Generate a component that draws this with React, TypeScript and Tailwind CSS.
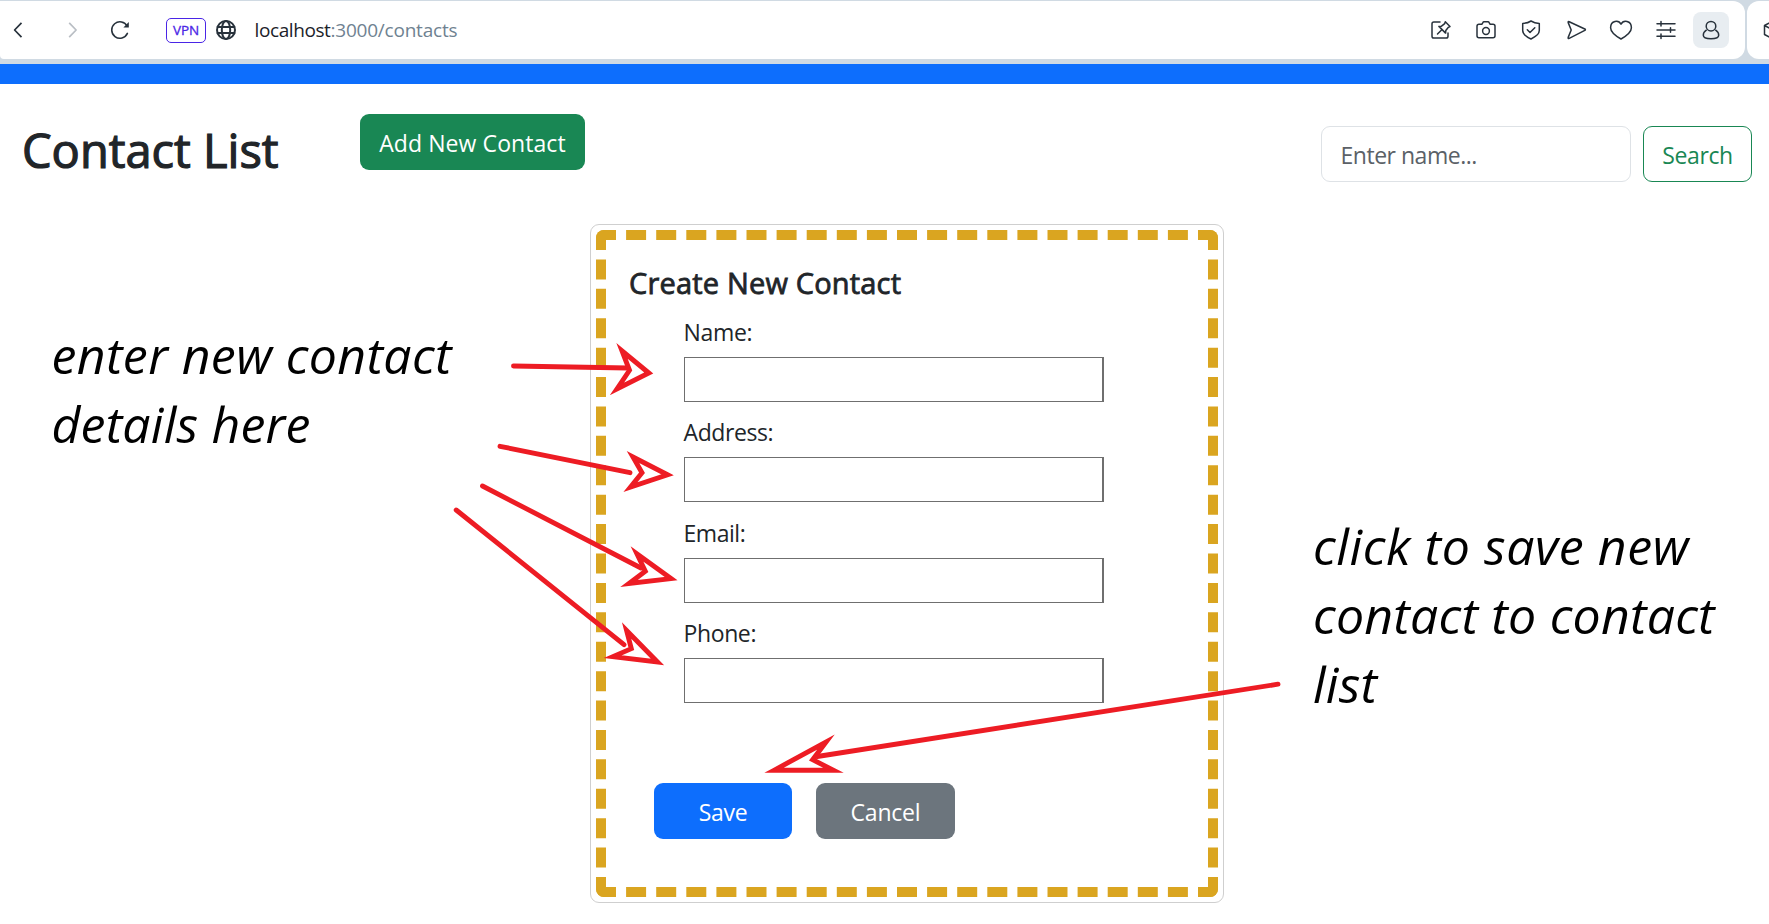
import type { ReactNode } from "react";

function Glyph({ children, className = "" }: { children: ReactNode; className?: string }) {
  return (
    <svg
      viewBox="0 0 24 24"
      className={`h-6 w-6 shrink-0 ${className}`}
      fill="none"
      stroke="currentColor"
      strokeWidth="1.5"
      strokeLinecap="round"
      strokeLinejoin="round"
    >
      {children}
    </svg>
  );
}

function BrowserBar() {
  return (
    <div className="flex h-16 gap-[2px] bg-[#d0dae3] pt-px pb-[5px] text-[#28323c]">
      <div className="flex w-[1745px] shrink-0 items-center rounded-r-xl rounded-bl-sm bg-white">
        <Glyph className="ml-[6px]">
          <path d="M15.5 4.8 8.6 12l6.9 7.2" strokeLinecap="butt" strokeWidth="1.7" />
        </Glyph>
        <Glyph className="ml-[31px] text-[#b9bec4]">
          <path d="m8.2 4.8 6.9 7.2-6.9 7.2" strokeLinecap="butt" strokeWidth="1.7" />
        </Glyph>
        <Glyph className="ml-[23px]">
          <path d="M19.2 8.2A8.2 8.2 0 1 0 19.4 15.4" strokeWidth="1.6" />
          <path d="M20.8 4v5.4h-5.4z" fill="currentColor" stroke="none" />
        </Glyph>
        <div className="ml-[34px] flex h-[25px] w-10 items-center justify-center rounded-[5px] border border-[#4a25e6] pt-[2px] text-[13.5px] leading-none tracking-[-0.1px] text-[#4a25e6] [-webkit-text-stroke:0.3px_#4a25e6]">
          VPN
        </div>
        <Glyph className="ml-[8px]">
          <g strokeWidth="2">
            <circle cx="12" cy="12" r="9" />
            <ellipse cx="12" cy="12" rx="4.2" ry="9" />
            <path d="M3.6 9h16.8M3.6 15h16.8" />
          </g>
        </Glyph>
        <div className="ml-[16.500px] flex text-[19px] leading-7 text-[#6f8291]">
          <span className="tracking-[-0.4px] text-[#1b2229]">localhost</span>
          <span className="tracking-[-0.22px]">:3000/contacts</span>
        </div>
        <div className="mr-4 ml-auto flex items-center">
          <Glyph>
            <path d="M11 4H4.8Q3 4 3 5.8v12.4Q3 20 4.8 20h12.4q1.8 0 1.8-1.800V15" />
            <path d="M16.3 3.8 21 8.5l-1.6.8-2.6 3.2-.2 2.6-6.7-6.7 2.6-.2 3.2-2.600zM12.8 11.7 8.5 16" />
          </Glyph>
          <Glyph className="ml-[21px]">
            <path d="M8 6.200 9 4.400q.3-.7 1-.7h4q.7 0 1 .7l1 1.800h3q2 0 2 2v9.600q0 2-2 2H5q-2 0-2-2V8.200q0-2 2-2z" />
            <circle cx="12" cy="13" r="3.400" />
          </Glyph>
          <Glyph className="ml-[21px]">
            <path d="M12 3q3.500 2.300 8.300 2.400v7.200c0 4-4 6.400-8.300 8.400-4.300-2-8.300-4.400-8.300-8.400V5.400Q8.500 5.300 12 3z" />
            <path d="m8.300 11.800 2.700 2.700 4.800-4.800" />
          </Glyph>
          <Glyph className="ml-[21px]">
            <path d="M5.200 3.700 20.800 11q1.200.7 0 1.400L5.200 20.300q-1.400.5-1-.9L7.200 12 4.200 4.600q-.3-1.400 1-.9z" />
          </Glyph>
          <Glyph className="ml-[21px]">
            <path d="M12 6.200C9.700 1.500 1.600 2.300 1.600 9.700c0 5 5.400 8.400 10.400 11.300 5-2.900 10.400-6.300 10.400-11.300C22.400 2.300 14.300 1.500 12 6.200z" />
          </Glyph>
          <Glyph className="ml-[21px]">
            <path d="M3 5.700h18M3 12h18M3 18.300h18M7 3.500v4.400M16.500 9.800v4.400M7 16.100v4.400" />
          </Glyph>
          <div className="ml-[15px] flex h-9 w-9 items-center justify-center rounded-lg bg-[#e8edf1]">
            <Glyph>
              <circle cx="12" cy="8.200" r="4.800" />
              <path d="M7.300 12.200c-1.900 1.300-3 3.200-3 5 0 2.600 3 3.500 7.700 3.500s7.700-.9 7.700-3.500c0-1.800-1.100-3.700-3-5" />
            </Glyph>
          </div>
        </div>
      </div>
      <div className="flex grow items-center overflow-hidden rounded-l-xl bg-white">
        <Glyph className="ml-[14px]">
          <path d="m12 3 8.500 4.500v9L12 21l-8.500-4.500v-9zM3.500 7.500 12 12l8.500-4.500M12 12v9" />
        </Glyph>
      </div>
    </div>
  );
}

function Field({ label, spacing }: { label: string; spacing: string }) {
  return (
    <label className="mb-[12.4px] block">
      <span className={`block h-9 text-[23px] leading-[37.700px] ${spacing}`}>{label}</span>
      <input className="mt-[7px] block h-[45px] w-[420px] border border-r-2 border-[#6f6f6f] bg-white px-2 outline-none" />
    </label>
  );
}

function ContactForm() {
  return (
    <form className="h-[679px] w-[634px] shrink-0 rounded-[9px] border border-[#cfcfcf] p-[5px]">
      <div className="h-full rounded-[8px] border-[10px] border-dashed border-[#daa520] pt-[25px] pl-[23px]">
        <h2 className="h-9 text-[29px] leading-9 tracking-[0.18px] [-webkit-text-stroke:0.8px_#212529]">
          Create New Contact
        </h2>
        <div className="mt-[13px] ml-[54.500px]">
          <Field label="Name:" spacing="tracking-[-0.3px]" />
          <Field label="Address:" spacing="tracking-[-0.4px]" />
          <Field label="Email:" spacing="tracking-[-0.45px]" />
          <Field label="Phone:" spacing="tracking-[-0.38px]" />
        </div>
        <div className="mt-[79.900px] ml-[25px] flex gap-6 text-[23px] leading-9 text-white">
          <button type="button" className="h-14 w-[138px] rounded-[9px] bg-[#0d6efd] pt-[2px] tracking-[-0.3px]">
            Save
          </button>
          <button type="button" className="h-14 w-[139px] rounded-[9px] bg-[#6c757d] pt-[2px] tracking-[-0.22px]">
            Cancel
          </button>
        </div>
      </div>
    </form>
  );
}

const arrows = [
  { shaft: "M513.500 366 628 368", head: "M648.800 373 622 350.800 629.500 370.300 617 389z" },
  { shaft: "M500 446.300 630 472.700", head: "M667.500 474.800 633 457 642 472.700 630.500 487z" },
  { shaft: "M482.500 486 641 568", head: "M671 578.600 637 554 645.300 571.300 629 583.500z" },
  { shaft: "M456.200 510 624 644.700", head: "M657.500 662 626.600 630.500 631.300 648.700 613 656.600z" },
  { shaft: "M1278 684.200 817.300 756.500", head: "M774 770.300 826 742 812.700 759.700 833.500 770.300z" },
];

function Arrows() {
  return (
    <svg
      viewBox="0 0 1769 924"
      className="pointer-events-none absolute inset-0 h-[924px] w-[1769px]"
      fill="none"
      stroke="#ed1c24"
      strokeWidth="4.9"
      strokeMiterlimit="12"
    >
      {arrows.map((arrow) => (
        <g key={arrow.head}>
          <path d={arrow.shaft} strokeLinecap="round" />
          <path d={arrow.head} />
        </g>
      ))}
    </svg>
  );
}

export default function App() {
  return (
    <div className="relative h-[924px] w-[1769px] overflow-hidden bg-white font-['Open_Sans','Noto_Sans',sans-serif] text-[#212529]">
      <BrowserBar />
      <div className="h-5 bg-[#0d6efd]" />
      <header className="flex h-[140px] items-start pr-[17px] pl-[22px]">
        <h1 className="mt-[37.500px] w-[338px] text-[47px] leading-[56px] [-webkit-text-stroke:1.2px_#212529]">
          Contact List
        </h1>
        <button
          type="button"
          className="mt-[30px] h-14 w-[225px] rounded-[9px] bg-[#198754] pt-[2px] text-[23px] leading-9 tracking-[0.08px] text-white"
        >
          Add New Contact
        </button>
        <div className="mt-[42px] ml-auto flex gap-3 text-[23px] leading-9">
          <input
            placeholder="Enter name..."
            className="h-14 w-[310px] rounded-[9px] border border-[#dee2e6] bg-white pt-[2px] pl-[18.500px] tracking-[-0.48px] outline-none placeholder:text-[#5b6167]"
          />
          <button
            type="button"
            className="h-14 w-[109px] rounded-[9px] border border-[#198754] pt-[2px] tracking-[-0.35px] text-[#198754]"
          >
            Search
          </button>
        </div>
      </header>
      <main className="flex items-start">
        <p className="mt-[97px] w-[590px] shrink-0 pl-[51.500px] text-[50px] leading-[68.700px] text-black italic">
          <span className="block tracking-[0.39px]">enter new contact</span>
          <span className="block tracking-[0.2px]">details here</span>
        </p>
        <ContactForm />
        <p className="mt-[288.400px] shrink-0 pl-[89px] text-[50px] leading-[68.900px] text-black italic">
          <span className="block tracking-[0.6px]">click to save new</span>
          <span className="block tracking-[0.23px]">contact to contact</span>
          <span className="block tracking-[0.2px]">list</span>
        </p>
      </main>
      <Arrows />
    </div>
  );
}
